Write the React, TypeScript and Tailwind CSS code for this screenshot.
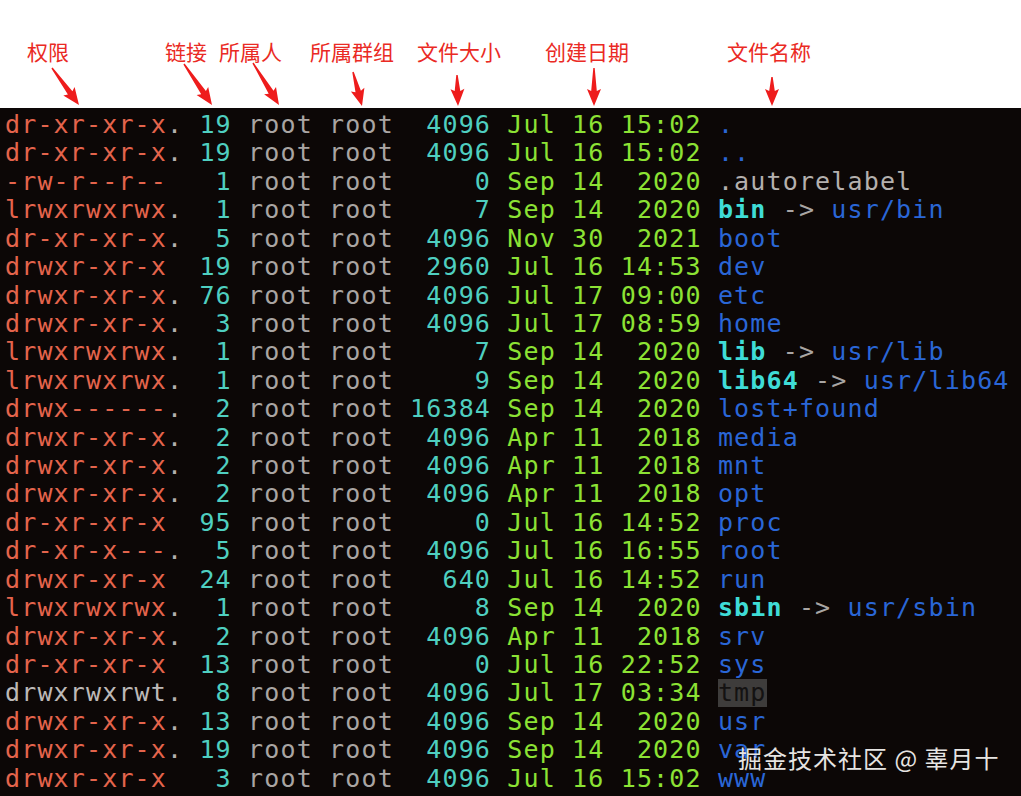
type Row = {
  perm: string
  dot: boolean
  links: string
  size: string
  date: string
  name: string
  kind?: 'dir' | 'file' | 'link' | 'sticky'
  target?: string
}

const ROWS: Row[] = [
  { perm: 'dr-xr-xr-x', dot: true, links: '19', size: '4096', date: 'Jul 16 15:02', name: '.' },
  { perm: 'dr-xr-xr-x', dot: true, links: '19', size: '4096', date: 'Jul 16 15:02', name: '..' },
  { perm: '-rw-r--r--', dot: false, links: '1', size: '0', date: 'Sep 14  2020', name: '.autorelabel', kind: 'file' },
  { perm: 'lrwxrwxrwx', dot: true, links: '1', size: '7', date: 'Sep 14  2020', name: 'bin', kind: 'link', target: 'usr/bin' },
  { perm: 'dr-xr-xr-x', dot: true, links: '5', size: '4096', date: 'Nov 30  2021', name: 'boot' },
  { perm: 'drwxr-xr-x', dot: false, links: '19', size: '2960', date: 'Jul 16 14:53', name: 'dev' },
  { perm: 'drwxr-xr-x', dot: true, links: '76', size: '4096', date: 'Jul 17 09:00', name: 'etc' },
  { perm: 'drwxr-xr-x', dot: true, links: '3', size: '4096', date: 'Jul 17 08:59', name: 'home' },
  { perm: 'lrwxrwxrwx', dot: true, links: '1', size: '7', date: 'Sep 14  2020', name: 'lib', kind: 'link', target: 'usr/lib' },
  { perm: 'lrwxrwxrwx', dot: true, links: '1', size: '9', date: 'Sep 14  2020', name: 'lib64', kind: 'link', target: 'usr/lib64' },
  { perm: 'drwx------', dot: true, links: '2', size: '16384', date: 'Sep 14  2020', name: 'lost+found' },
  { perm: 'drwxr-xr-x', dot: true, links: '2', size: '4096', date: 'Apr 11  2018', name: 'media' },
  { perm: 'drwxr-xr-x', dot: true, links: '2', size: '4096', date: 'Apr 11  2018', name: 'mnt' },
  { perm: 'drwxr-xr-x', dot: true, links: '2', size: '4096', date: 'Apr 11  2018', name: 'opt' },
  { perm: 'dr-xr-xr-x', dot: false, links: '95', size: '0', date: 'Jul 16 14:52', name: 'proc' },
  { perm: 'dr-xr-x---', dot: true, links: '5', size: '4096', date: 'Jul 16 16:55', name: 'root' },
  { perm: 'drwxr-xr-x', dot: false, links: '24', size: '640', date: 'Jul 16 14:52', name: 'run' },
  { perm: 'lrwxrwxrwx', dot: true, links: '1', size: '8', date: 'Sep 14  2020', name: 'sbin', kind: 'link', target: 'usr/sbin' },
  { perm: 'drwxr-xr-x', dot: true, links: '2', size: '4096', date: 'Apr 11  2018', name: 'srv' },
  { perm: 'dr-xr-xr-x', dot: false, links: '13', size: '0', date: 'Jul 16 22:52', name: 'sys' },
  { perm: 'drwxrwxrwt', dot: true, links: '8', size: '4096', date: 'Jul 17 03:34', name: 'tmp', kind: 'sticky' },
  { perm: 'drwxr-xr-x', dot: true, links: '13', size: '4096', date: 'Sep 14  2020', name: 'usr' },
  { perm: 'drwxr-xr-x', dot: true, links: '19', size: '4096', date: 'Sep 14  2020', name: 'var' },
  { perm: 'drwxr-xr-x', dot: false, links: '3', size: '4096', date: 'Jul 16 15:02', name: 'www' },
]

// label left edge + arrow tail/tip, picked off the screenshot
const LABELS = [
  { text: '权限', x: 27, tail: [52, 68], tip: [79, 105] },
  { text: '链接', x: 165, tail: [184, 64], tip: [212, 105] },
  { text: '所属人', x: 219, tail: [253, 63], tip: [279, 105] },
  { text: '所属群组', x: 310, tail: [353, 72], tip: [362, 106] },
  { text: '文件大小', x: 417, tail: [457, 75], tip: [458, 106] },
  { text: '创建日期', x: 545, tail: [594, 68], tip: [594, 106] },
  { text: '文件名称', x: 727, tail: [772, 77], tip: [772, 106] },
]

const arrowPoints = (tail: number[], tip: number[]) => {
  const dx = tip[0] - tail[0]
  const dy = tip[1] - tail[1]
  const len = Math.hypot(dx, dy)
  const ux = dx / len
  const uy = dy / len
  const nx = -uy
  const ny = ux
  const nk = [tip[0] - ux * 15, tip[1] - uy * 15]
  const wing = [nk[0] - ux * 2, nk[1] - uy * 2]
  const pt = (b: number[], w: number) => `${(b[0] + nx * w).toFixed(1)},${(b[1] + ny * w).toFixed(1)}`
  return [
    pt(tail, 0.7),
    pt(nk, 2.8),
    pt(wing, 7),
    `${tip[0]},${tip[1]}`,
    pt(wing, -7),
    pt(nk, -2.8),
    pt(tail, -0.7),
  ].join(' ')
}

const Name = ({ row }: { row: Row }) => {
  if (row.kind === 'file') return <span className="text-[#b4b0ae]">{row.name}</span>
  if (row.kind === 'sticky')
    return <span className="bg-[#3e3c3b] text-[#141212] inline-block leading-[28px]">{row.name}</span>
  if (row.kind === 'link')
    return (
      <>
        <span className="text-[#3fdcd6] font-bold">{row.name}</span>
        <span className="text-[#a9a5a3]"> -&gt; </span>
        <span className="text-[#2a66d6]">{row.target}</span>
      </>
    )
  return <span className="text-[#2a66d6]">{row.name}</span>
}

export default function App() {
  return (
    <div className="w-[1021px] h-[796px] overflow-hidden bg-white flex flex-col">
      <div className="relative h-[108px] shrink-0 bg-white">
        {LABELS.map((l) => (
          <span
            key={l.text}
            className="absolute top-[41px] text-[21px] leading-[21px] text-[#ea2a24] whitespace-nowrap"
            style={{ left: l.x, fontFamily: '"Noto Sans CJK SC", "Noto Sans", sans-serif' }}
          >
            {l.text}
          </span>
        ))}
        <svg className="absolute inset-0" width="1021" height="108" viewBox="0 0 1021 108">
          {LABELS.map((l) => (
            <polygon key={l.text} points={arrowPoints(l.tail, l.tip)} fill="#ee1c1c" />
          ))}
        </svg>
      </div>

      <div className="relative flex-1 bg-[#0c0706] pl-[5px] pt-[3px] font-['DejaVu_Sans_Mono',monospace] text-[25px] leading-[28.43px] tracking-[1.15px]">
        {ROWS.map((r, i) => (
          <div key={i} className="whitespace-pre h-[28.43px]">
            <span className={r.kind === 'sticky' ? 'text-[#bdb9b7]' : 'text-[#e4644c]'}>{r.perm}</span>
            <span className="text-[#b4b0ae]">{r.dot ? '.' : ' '}</span>
            <span> </span>
            <span className="text-[#4fcfc0]">{r.links.padStart(2, ' ')}</span>
            <span className="text-[#a9a5a3]"> root root </span>
            <span className="text-[#4fcfc0]">{r.size.padStart(5, ' ')}</span>
            <span> </span>
            <span className="text-[#8ce234]">{r.date}</span>
            <span> </span>
            <Name row={r} />
          </div>
        ))}

        <div
          className="absolute left-[738px] top-[638px] text-[24px] leading-[24px] text-[#e6e4e2] tracking-[1px] whitespace-pre"
          style={{ fontFamily: '"Noto Sans CJK SC", "Noto Sans", sans-serif' }}
        >
          掘金技术社区 @ 辜月十
        </div>
      </div>
    </div>
  )
}
